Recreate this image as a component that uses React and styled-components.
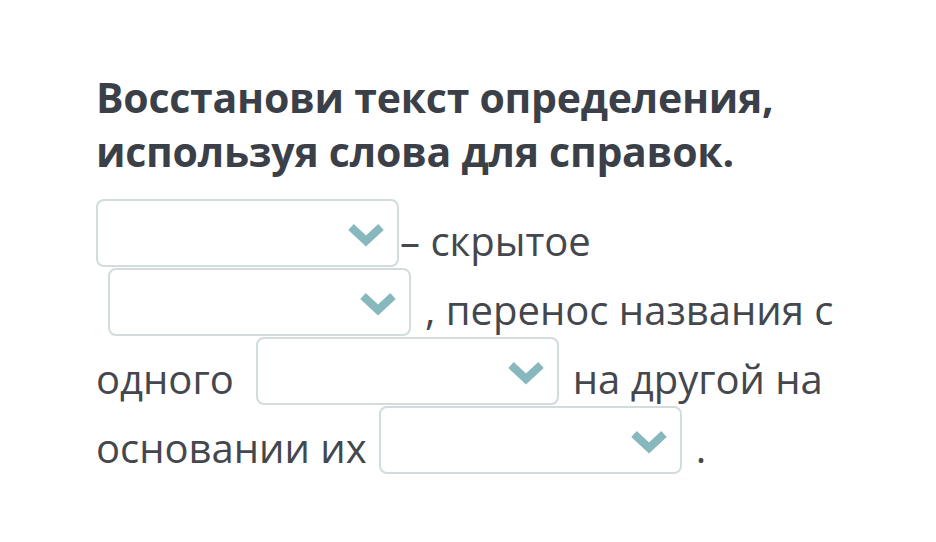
import React from 'react';
import styled, { createGlobalStyle } from 'styled-components';

const Global = createGlobalStyle`
  body {
    margin: 0;
    background: #ffffff;
    font-family: "Open Sans", "Noto Sans", sans-serif;
  }
`;

// Карточка задания
const Page = styled.div`
  width: 936px;
  height: 542px;
  padding: 70px 0 0 96px;
  box-sizing: border-box;
  background: #fff;
`;

const Title = styled.h2`
  margin: 0 0 22px;
  font-size: 41px;
  line-height: 54px;
  font-weight: 700;
  color: #3b3f48;
  letter-spacing: -0.25px;
`;

const Body = styled.div`
  display: flex;
  flex-direction: column;
  color: #44474d;
  font-size: 40px;
`;

const Line = styled.div`
  display: flex;
  align-items: flex-end;
  height: 67px;
  margin-bottom: 2px;
`;

const Word = styled.span`
  line-height: normal;
  margin-left: ${(p) => p.$before || 0}px;
  margin-bottom: -1px;
  white-space: pre;
`;

// Выпадающий список
const Select = styled.div`
  flex: none;
  box-sizing: border-box;
  width: 303px;
  height: 68px;
  margin-left: ${(p) => p.$before || 0}px;
  border: 2px solid #d3dcdd;
  border-radius: 8px;
  background: #fff;
  display: flex;
  align-items: center;
  justify-content: flex-end;
  padding: 4px 11px 0 0;
`;

const Chevron = () => (
  <svg width="40" height="28" viewBox="0 0 40 28">
    <path d="M5 6 L20 20 L35 6" fill="none" stroke="#86b8bd" strokeWidth="8" strokeLinecap="butt" strokeLinejoin="miter" />
  </svg>
);

const Dropdown = ({ before }) => (
  <Select $before={before}>
    <Chevron />
  </Select>
);

export default function App() {
  return (
    <Page>
      <Global />
      <Title>
        Восстанови текст определения,
        <br />
        используя слова для справок.
      </Title>
      <Body>
        <Line>
          <Dropdown />
          <Word $before={1}>– скрытое</Word>
        </Line>
        <Line>
          <Dropdown before={12} />
          <Word $before={14}>, перенос названия с</Word>
        </Line>
        <Line>
          <Word>одного</Word>
          <Dropdown before={22} />
          <Word $before={14}>на другой на</Word>
        </Line>
        <Line>
          <Word>основании их</Word>
          <Dropdown before={12} />
          <Word $before={14}>.</Word>
        </Line>
      </Body>
    </Page>
  );
}
